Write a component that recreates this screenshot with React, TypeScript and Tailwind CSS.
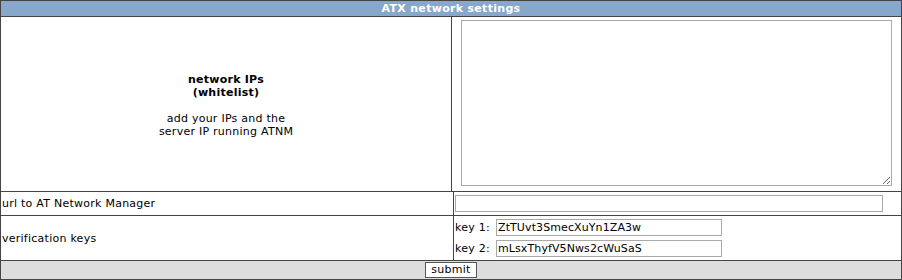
import React from "react";

export default function App() {
  const font = { fontFamily: '"DejaVu Sans", Verdana, sans-serif' };
  return (
    <div
      className="w-[902px] h-[280px] border border-[#444444] bg-white text-[11px] leading-[13px] tracking-[0.25px] text-black flex flex-col"
      style={font}
    >
      <div className="h-[15px] bg-[#87a7cb] text-white font-bold text-center leading-[15px] tracking-[0.3px] border-b border-[#444444] box-content">
        ATX network settings
      </div>
      <div className="flex h-[174px] border-b border-[#444444] box-content">
        <div className="w-[450px] border-r border-[#444444] box-content flex flex-col items-center justify-center text-center pt-[2px]">
          <div className="font-bold">
            network IPs
            <br />
            (whitelist)
          </div>
          <div className="h-[13px]" />
          <div>
            add your IPs and the
            <br />
            server IP running ATNM
          </div>
        </div>
        <div className="flex-1 pt-[3px] pl-[9px]">
          <textarea
            className="block w-[431px] h-[166px] border border-[#a9a9a9] bg-white outline-none"
            style={font}
          />
        </div>
      </div>
      <div className="flex h-[23px] border-b border-[#444444] box-content">
        <div className="w-[450px] border-r border-[#444444] box-content flex items-center px-px">
          url to AT Network Manager
        </div>
        <div className="flex-1 p-px flex items-center">
          <input
            className="block w-[428px] h-[17px] border border-[#a9a9a9] bg-white outline-none px-[2px] text-[11px]"
            style={font}
          />
        </div>
      </div>
      <div className="flex h-[44px] border-b border-[#444444] box-content">
        <div className="w-[450px] border-r border-[#444444] box-content flex items-center px-px">
          verification keys
        </div>
        <div className="flex-1 p-px flex flex-col">
          <div className="h-[21px] flex items-center">
            <span className="w-[41px]">key 1:</span>
            <input
              className="block w-[226px] h-[17px] border border-[#a9a9a9] bg-white outline-none px-[1px] text-[11px] tracking-[0.1px] text-black"
              style={font}
              defaultValue="ZtTUvt3SmecXuYn1ZA3w"
            />
          </div>
          <div className="h-[21px] flex items-center">
            <span className="w-[41px]">key 2:</span>
            <input
              className="block w-[226px] h-[17px] border border-[#a9a9a9] bg-white outline-none px-[1px] text-[11px] tracking-[0.1px] text-black"
              style={font}
              defaultValue="mLsxThyfV5Nws2cWuSaS"
            />
          </div>
        </div>
      </div>
      <div className="h-[18px] bg-[#dddddd] flex items-center justify-center">
        <button
          className="w-[52px] h-[16px] border border-[#555555] bg-white text-[11px] leading-[14px] tracking-[0.25px] text-black"
          style={font}
        >
          submit
        </button>
      </div>
    </div>
  );
}
